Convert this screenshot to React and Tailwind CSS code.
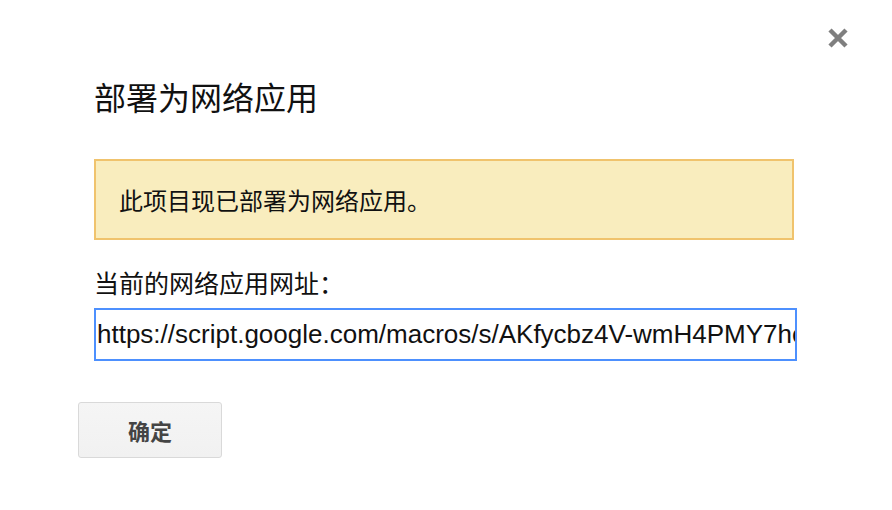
import React from 'react';

const cjk = { fontFamily: '"Noto Sans CJK SC", "Noto Sans", sans-serif' };

const CloseIcon = () => (
    <svg width="24" height="24" viewBox="0 0 24 24">
        <path d="M4 4 L20 20 M20 4 L4 20" stroke="#7f7f7f" strokeWidth="4.5" strokeLinecap="butt" />
    </svg>
);

const App = () => {
    const url = 'https://script.google.com/macros/s/AKfycbz4V-wmH4PMY7hcQxw2Lk8dJ0pRzT5uNvA3sE/exec';

    return (
        <div className="relative w-[892px] h-[510px] bg-white overflow-hidden" style={cjk}>
            {/* Close */}
            <button className="absolute top-[26px] left-[826px] p-0 cursor-pointer">
                <CloseIcon />
            </button>

            <div className="flex flex-col items-start pl-[94px] pt-[76px]">
                <h1 className="text-[32px] leading-[40px] font-normal text-[#111]">部署为网络应用</h1>

                {/* Notice */}
                <div className="mt-[43px] w-[700px] h-[81px] flex items-center border-2 border-[#f0c36d] bg-[#f9edbe] pl-[23px]">
                    <span className="text-[24px] leading-[30px] text-[#111]">此项目现已部署为网络应用。</span>
                </div>

                <label className="mt-[27px] text-[25px] leading-[30px] text-[#111]">当前的网络应用网址：</label>

                <input
                    readOnly
                    value={url}
                    className="mt-[11px] w-[703px] h-[53px] border-2 border-[#4d90fe] pl-[1px] pr-0 text-[26px] text-[#111] outline-none bg-white"
                    style={{ fontFamily: '"Liberation Sans", Arial, sans-serif' }}
                />

                <button className="mt-[41px] -ml-[16px] w-[144px] h-[56px] rounded-[3px] border border-[#d9d9d9] bg-gradient-to-b from-[#f5f5f5] to-[#f1f1f1] text-[22px] font-bold text-[#444]">
                    确定
                </button>
            </div>
        </div>
    );
};

export default App;
